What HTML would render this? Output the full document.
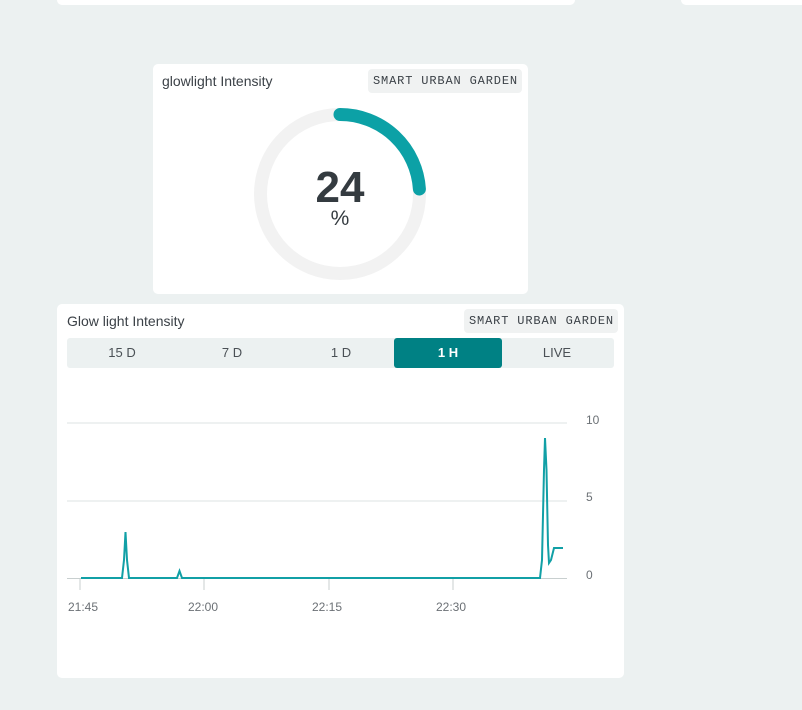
<!DOCTYPE html>
<html><head><style>
body{margin:0;width:802px;height:710px;background:#ecf1f1;position:relative;overflow:hidden;font-family:"Liberation Sans",sans-serif}
.card{position:absolute;background:#fff;border-radius:5px}
.t{position:absolute;font-size:14px;color:#3b4147}
.tag{position:absolute;background:#f0f2f2;border-radius:4px;font-family:"Liberation Mono",monospace;font-size:12px;letter-spacing:0.85px;color:#3b4147;padding:0 4px 0 5px;height:24px;line-height:24px}
.tabs{position:absolute;left:67px;top:338px;width:547px;height:30px;background:#ecf1f1;border-radius:3px}
.tab{position:absolute;top:0;height:30px;line-height:30px;text-align:center;font-size:13px;color:#4a5055}
</style></head><body>
<div class="card" style="left:57px;top:-10px;width:518px;height:15px"></div>
<div class="card" style="left:681px;top:-10px;width:130px;height:15px"></div>

<div class="card" style="left:153px;top:64px;width:375px;height:230px"></div>
<div class="t" style="left:162px;top:73px">glowlight Intensity</div>
<div class="tag" style="left:368px;top:69px">SMART URBAN GARDEN</div>
<svg style="position:absolute;left:0;top:0" width="802" height="710">
<circle cx="340" cy="194" r="79.5" fill="none" stroke="#f2f2f2" stroke-width="13"/>
<path d="M340 114.5 A79.5 79.5 0 0 1 419.4 189" fill="none" stroke="#0ca1a6" stroke-width="13" stroke-linecap="round"/>
<text x="340" y="202" text-anchor="middle" font-family="Liberation Sans" font-weight="bold" font-size="44" fill="#343b40">24</text>
<text x="340" y="225" text-anchor="middle" font-family="Liberation Sans" font-size="21" fill="#343b40">%</text>
</svg>

<div class="card" style="left:57px;top:304px;width:567px;height:374px"></div>
<div class="t" style="left:67px;top:313px">Glow light Intensity</div>
<div class="tag" style="left:464px;top:309px">SMART URBAN GARDEN</div>
<div class="tabs">
<div class="tab" style="left:0;width:110px">15 D</div>
<div class="tab" style="left:110px;width:110px">7 D</div>
<div class="tab" style="left:219px;width:110px">1 D</div>
<div class="tab" style="left:327px;width:108px;background:#008184;color:#fff;font-weight:bold;border-radius:3px">1 H</div>
<div class="tab" style="left:435px;width:110px">LIVE</div>
</div>
<svg style="position:absolute;left:0;top:0" width="802" height="710" font-family="Liberation Sans" font-size="12" fill="#6b7075">
<line x1="67" y1="423" x2="567" y2="423" stroke="#dde3e3"/>
<line x1="67" y1="501" x2="567" y2="501" stroke="#dde3e3"/>
<line x1="67" y1="578.5" x2="567" y2="578.5" stroke="#c8cfcf"/>
<g stroke="#c8cfcf"><line x1="80" y1="579" x2="80" y2="590"/><line x1="204" y1="579" x2="204" y2="590"/><line x1="329" y1="579" x2="329" y2="590"/><line x1="453" y1="579" x2="453" y2="590"/></g>
<text x="586" y="424">10</text><text x="586" y="501">5</text><text x="586" y="579">0</text>
<text x="68" y="611">21:45</text><text x="188" y="611">22:00</text><text x="312" y="611">22:15</text><text x="436" y="611">22:30</text>
<path d="M81 578 L122 578 L124 560 L125.5 532 L127 560 L129 578 L177 578 L179.5 571 L182 578 L540 578 L542 560 L544 470 L545 438 L546.5 470 L548 545 L549 563 L551 560 L554 548 L563 548" fill="none" stroke="#11a0a6" stroke-width="2"/>
</svg>
</body></html>
